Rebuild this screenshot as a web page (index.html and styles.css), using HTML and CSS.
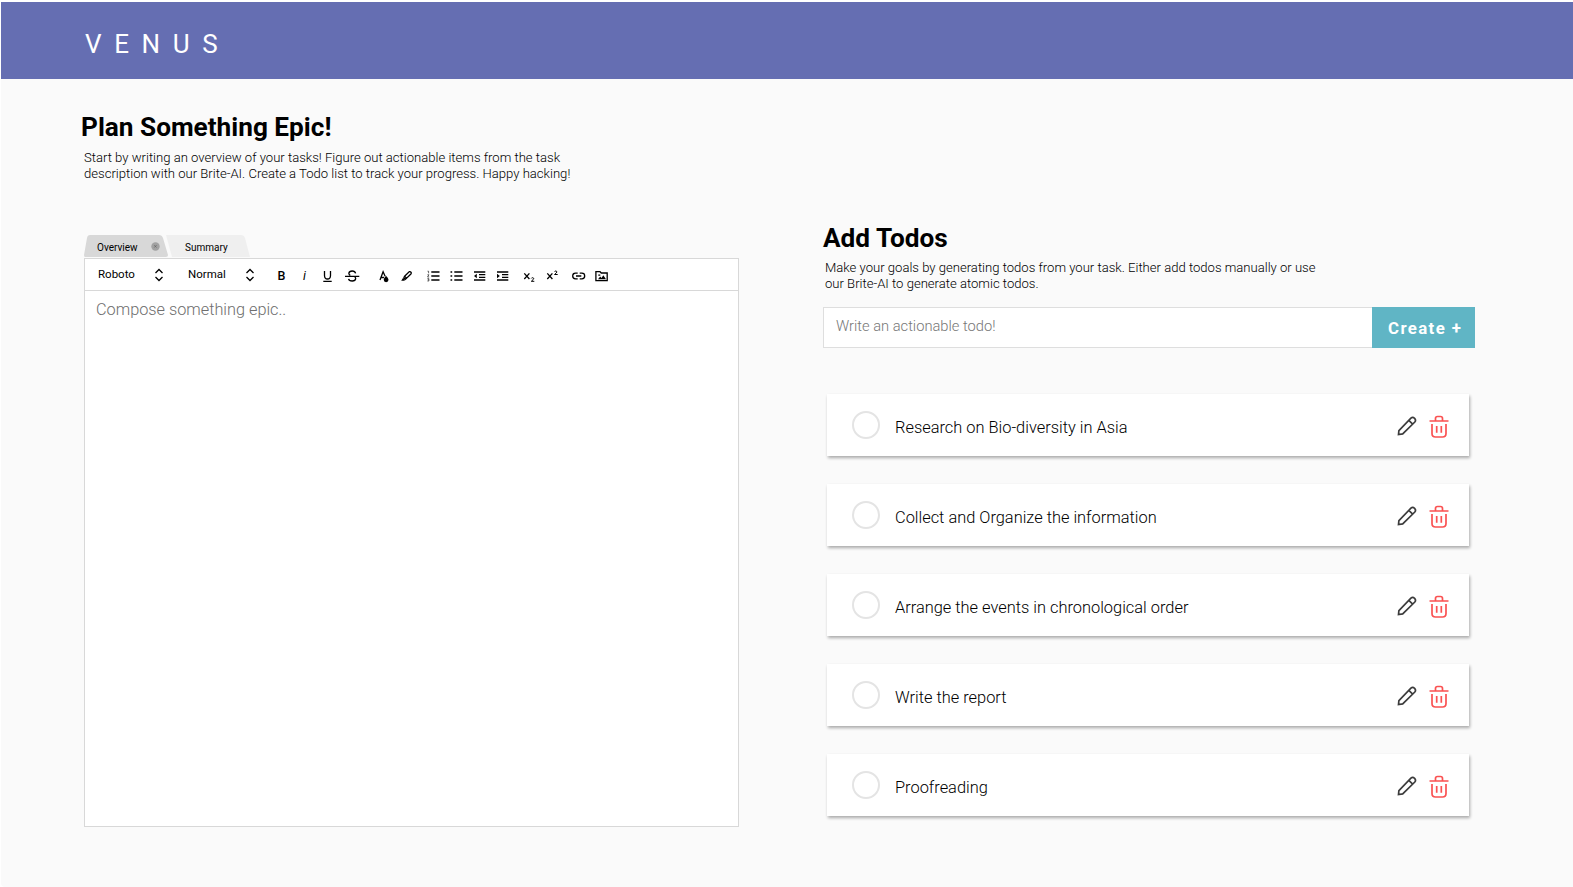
FILE: index.html
```html
<!DOCTYPE html>
<html lang="en">
<head>
<meta charset="utf-8">
<title>Venus</title>
<link rel="stylesheet" href="styles.css">
</head>
<body>
<svg class="defs" width="0" height="0">
  <symbol id="sort" viewBox="0 0 10 14"><path d="M1.5 5 5 1.5 8.500 5M1.500 9 5 12.500 8.500 9"/></symbol>
  <symbol id="pencil" viewBox="0 0 20 20"><path d="M1.500 18.500 1.900 14.700 13.900 2.200Q15.700.600 17.600 2.300 19.300 4.100 17.800 6L5.700 17.900ZM11.800 4.400 15.700 8.200"/></symbol>
  <symbol id="trash" viewBox="0 0 20 23"><path d="M.500 6H19.500M6.500 6V3.500Q6.500 1.500 8.500 1.500H11.500Q13.500 1.500 13.500 3.500V6M3 9V18.500Q3 22 6.500 22H13.500Q17 22 17 18.500V9M7.700 11V17.800M12.300 11V17.800"/></symbol>
</svg>
<div class="app">
  <header class="header"><span class="logo">VENUS</span></header>
  <main class="main">
    <section class="plan">
      <h1 class="title">Plan Something Epic!</h1>
      <p class="lead">Start by writing an overview of your tasks! Figure out actionable items from the task<br>description with our Brite-AI. Create a Todo list to track your progress. Happy hacking!</p>
      <div class="tabs">
        <div class="tab tab-active">
          <svg class="tab-shape" viewBox="0 0 84 22" preserveAspectRatio="none"><path d="M0 20 3 3Q3.500 0 6 0H75Q78 0 79 3L84 20Q84 22 82 22H1Q0 22 0 20Z"/></svg>
          <span class="tab-label">Overview</span>
          <svg class="tab-close" viewBox="0 0 9 9"><circle cx="4.500" cy="4.500" r="4.200" fill="#a2a2a2"/><path d="M3.300 3.200 5.500 5.500M5.500 3.200 3.300 5.500" stroke="#666" stroke-width=".8"/></svg>
        </div>
        <div class="tab tab-idle">
          <svg class="tab-shape" viewBox="0 0 84 22" preserveAspectRatio="none"><path d="M0 0H75Q78 0 79 3L84 22H6Z"/></svg>
          <span class="tab-label">Summary</span>
        </div>
      </div>
      <div class="editor">
        <div class="toolbar">
          <div class="select font-select"><span>Roboto</span><svg class="sort"><use href="#sort"/></svg></div>
          <div class="select size-select"><span>Normal</span><svg class="sort"><use href="#sort"/></svg></div>
          <div class="tools">
            <span class="tool bold">B</span>
            <span class="tool italic">i</span>
            <svg class="tool" viewBox="0 0 23 16"><path d="M8.500 3V7.500Q8.500 11 11.500 11T14.500 7.500V3M7.300 13.300H15.700"/></svg>
            <svg class="tool" viewBox="0 0 23 16"><path d="M6 8.300H20.300M16.600 5.400Q16.100 3 13.200 3T9.800 5.300Q9.800 6.700 11.300 7.300M9.600 10.800Q10 13 13.200 13T16.700 10.700Q16.700 9.300 15.600 8.700"/></svg>
          </div>
          <div class="tools color-tools">
            <svg class="tool" viewBox="0 0 23 16"><path d="M8 12 11.100 3.800 13.100 8.200M9.300 9.500H12"/><path class="solid" d="M14 7.800Q16.500 10.300 16.500 11.800A2.400 2.400 0 0 1 11.700 11.800Q11.700 10.300 14 7.800Z"/></svg>
            <svg class="tool" viewBox="0 0 23 16"><path d="M9.600 8.300 14.400 3.600Q15.300 3.300 16.200 4.500 16.500 5.200 15.900 6L11.600 10.200ZM9.600 8.300 8.800 10 10.200 11.300 11.600 10.200"/><path class="solid" d="M8 10 10 12 9.300 12.800H6.200Z"/></svg>
          </div>
          <div class="tools list-tools">
            <svg class="tool" viewBox="0 0 23 16"><path d="M9.300 4H17.500M9.300 8H17.500M9.300 12H17.500"/><path class="thin" d="M5.500 3.200H6.600V5.300M5.400 6.800H7L5.500 9H7.200M5.400 10.600H6.900V13H5.400M5.700 11.800H6.900"/></svg>
            <svg class="tool" viewBox="0 0 23 16"><path d="M9.300 4H17.500M9.300 8H17.500M9.300 12H17.500M5.500 4H7.200M5.500 8H7.200M5.500 12H7.200"/></svg>
            <svg class="tool" viewBox="0 0 23 16"><path d="M6 4H17.300M11 6.700H17.300M11 9.300H17.300M6 12H17.300"/><path class="solid" d="M6 8 8.800 5.700V10.300Z"/></svg>
            <svg class="tool" viewBox="0 0 23 16"><path d="M6 4H17.300M11 6.700H17.300M11 9.300H17.300M6 12H17.300"/><path class="solid" d="M8.800 8 6 5.700V10.300Z"/></svg>
          </div>
          <div class="tools script-tools">
            <svg class="tool" viewBox="0 0 23 16"><path d="M6.300 5.400 11.400 11M11.400 5.400 6.300 11"/><path class="small" d="M13.300 10.400Q13.600 9.700 14.600 9.700T15.700 10.700Q15.700 11.300 13.300 13.300H16.300"/></svg>
            <svg class="tool" viewBox="0 0 23 16"><path d="M6.300 5.400 11.400 11M11.400 5.400 6.300 11"/><path class="small" d="M13.500 3.700Q13.800 3 14.800 3T15.900 4Q15.900 4.600 13.500 6.500H16.700"/></svg>
          </div>
          <div class="tools insert-tools">
            <svg class="tool" viewBox="0 0 23 16"><path d="M10.700 5.200H8.500A2.800 2.800 0 0 0 8.500 10.800H10.700M12.700 5.200H14.900A2.800 2.800 0 0 1 14.900 10.800H12.700M9 8H14.300"/></svg>
            <svg class="tool" viewBox="0 0 23 16"><path d="M5.900 3.700H10L11.300 5H17.200V12.700H5.900Z"/><path class="solid" d="M8 11.300 10.200 8.500 11.500 10 13.300 7.300 16 11.300ZM8.300 6.500H10.300V7.800H8.300Z"/></svg>
          </div>
        </div>
        <div class="compose">Compose something epic..</div>
      </div>
    </section>
    <section class="todos">
      <h2 class="title">Add Todos</h2>
      <p class="lead">Make your goals by generating todos from your task. Either add todos manually or use<br>our Brite-AI to generate atomic todos.</p>
      <div class="create">
        <div class="create-input">Write an actionable todo!</div>
        <div class="create-button">Create +</div>
      </div>
      <div class="list">
        <div class="card"><span class="check"></span><span class="card-text">Research on Bio-diversity in Asia</span><svg class="pencil"><use href="#pencil"/></svg><svg class="trash"><use href="#trash"/></svg></div>
        <div class="card"><span class="check"></span><span class="card-text">Collect and Organize the information</span><svg class="pencil"><use href="#pencil"/></svg><svg class="trash"><use href="#trash"/></svg></div>
        <div class="card"><span class="check"></span><span class="card-text">Arrange the events in chronological order</span><svg class="pencil"><use href="#pencil"/></svg><svg class="trash"><use href="#trash"/></svg></div>
        <div class="card"><span class="check"></span><span class="card-text">Write the report</span><svg class="pencil"><use href="#pencil"/></svg><svg class="trash"><use href="#trash"/></svg></div>
        <div class="card"><span class="check"></span><span class="card-text">Proofreading</span><svg class="pencil"><use href="#pencil"/></svg><svg class="trash"><use href="#trash"/></svg></div>
      </div>
    </section>
  </main>
</div>
</body>
</html>
```
FILE: styles.css
```css
* { box-sizing: border-box; }
body { margin: 0; background: #fff; font-family: Roboto, sans-serif; color: #000; }
.defs { display: block; height: 0; }
.app { margin: 2px 0 0 1px; height: 885px; background: #fafafa; border-radius: 0 0 0 4px; overflow: hidden; }
.header { height: 77px; background: #656eb2; padding: 25px 0 0 84px; }
.logo { display: block; color: #fff; font-size: 26px; line-height: 34px; font-weight: 400; letter-spacing: 12.600px; }
.main { display: flex; }
.title { margin: 0; font-size: 26.200px; line-height: 32px; font-weight: 700; white-space: nowrap; }
.lead { margin: 0; font-size: 13.090px; line-height: 16px; font-weight: 300; white-space: nowrap; }
.plan { width: 656px; margin-left: 83px; padding-top: 32px; }
.plan .title { margin-left: -3px; }
.plan .lead { padding: 7px 0 0 0; }
.tabs { display: flex; margin: 53px 0 0 0; height: 22px; }
.tab { position: relative; width: 84px; height: 22px; display: flex; align-items: center; font-size: 10px; }
.tab-shape { position: absolute; inset: 0; width: 100%; height: 100%; fill: #d8d8d8; }
.tab-idle { margin-left: -2px; }
.tab-idle .tab-shape { fill: #efefef; }
.tab-label { position: relative; padding: 2px 0 0 13px; }
.tab-idle .tab-label { padding-left: 19px; }
.tab-close { position: relative; width: 9px; height: 9px; margin-left: 13px; }
.editor { width: 655px; height: 569px; margin-top: 1px; border: 1px solid #d8d8d8; background: #fff; }
.toolbar { height: 32px; display: flex; align-items: center; border-bottom: 1px solid #d8d8d8; }
.select { display: flex; align-items: center; justify-content: space-between; font-size: 11.500px; }
.select span { margin-top: -2px; }
.sort { width: 10px; height: 14px; fill: none; stroke: #000; stroke-width: 1.300; }
.font-select { width: 66px; margin-left: 13px; }
.size-select { width: 67px; margin-left: 24px; }
.tools { display: flex; margin: 2px 0 0 15px; }
.tool { width: 23px; height: 16px; fill: none; stroke: #000; stroke-width: 1.300; text-align: center; font-size: 12.500px; line-height: 16px; }
.bold { font-weight: 500; }
.italic { font-style: italic; }
.solid { fill: #000; stroke: none; }
.thin { stroke-width: .6; }
.small { stroke-width: 1; }
.color-tools { margin-left: 9.500px; }
.list-tools, .script-tools { margin-left: 4px; }
.insert-tools { margin-left: 3.500px; }
.compose { padding: 9px 11px; font-size: 16.300px; line-height: 20px; font-weight: 300; color: #6e6e6e; }
.todos { width: 652px; margin-left: 83px; padding-top: 143px; }
.todos .lead { padding: 6px 0 0 2px; }
.create { display: flex; height: 41px; margin-top: 15px; }
.create-input { width: 549px; border: 1px solid #dedede; border-right: 0; background: #fff; padding: 9px 12px; font-size: 14.700px; line-height: 18px; font-weight: 300; color: #777; }
.create-button { width: 103px; background: #60b5c5; color: #fff; font-size: 16.800px; line-height: 43px; font-weight: 700; letter-spacing: 1.400px; padding-left: 16px; white-space: nowrap; }
.list { display: flex; flex-direction: column; gap: 28px; width: 642px; margin: 46px 0 0 4px; }
.card { height: 62px; display: flex; align-items: center; background: #fff; box-shadow: 1px 2px 3px rgba(0, 0, 0, .32); }
.check { width: 28px; height: 28px; margin: -1px 15px 0 25px; border: 2px solid #e4e4e4; border-radius: 50%; }
.card-text { flex: 1; padding-top: 5px; font-size: 16.400px; line-height: 20px; font-weight: 300; }
.pencil { width: 20px; height: 20px; margin: 1px 12px 0 0; fill: none; stroke: #3c3c3c; stroke-width: 1.700; }
.trash { width: 20px; height: 23px; margin: 3px 20px 0 0; fill: none; stroke: #fa5252; stroke-width: 1.700; }
```
